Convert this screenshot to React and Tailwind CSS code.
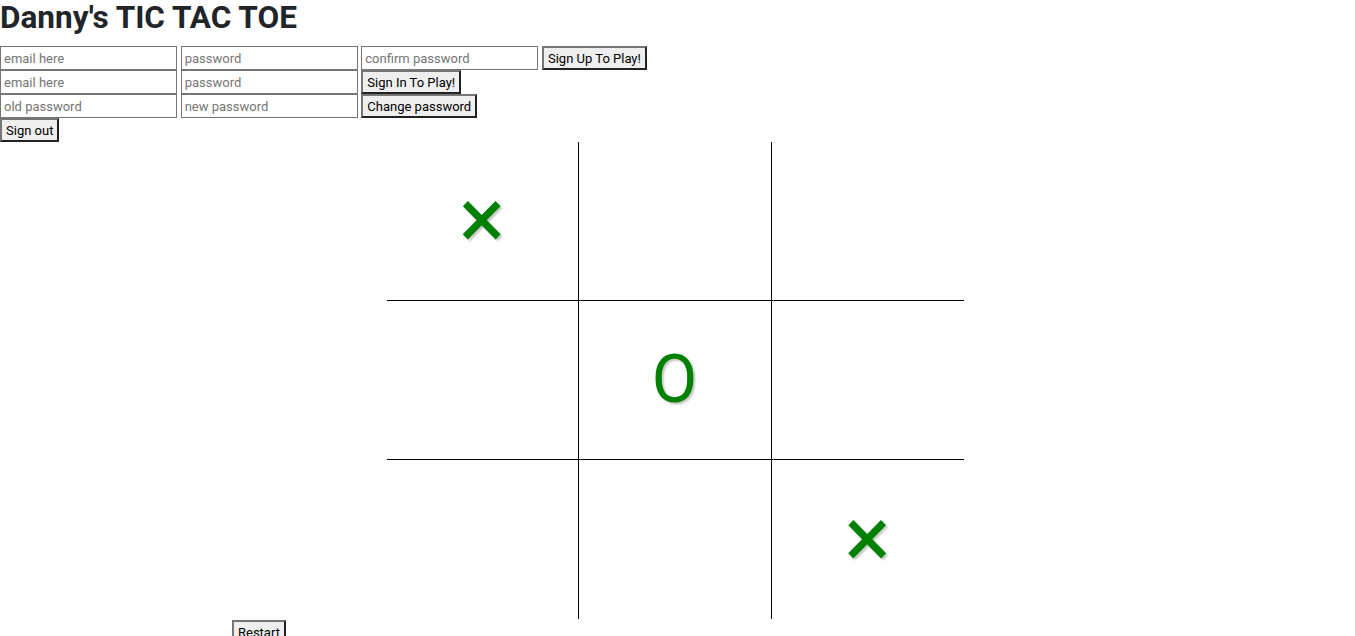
import React, { useState } from 'react';

const FONT = { fontFamily: 'Roboto, "Liberation Sans", sans-serif' };

const Field = ({ placeholder }) => (
  <input
    type="text"
    placeholder={placeholder}
    className="w-[177px] h-[24px] border border-[#767676] px-[3px] text-[13px] text-black placeholder:text-[#757575] outline-none bg-white"
    style={FONT}
  />
);

const Btn = ({ children, className = '' }) => (
  <button
    className={`h-[24px] px-[4px] text-[13px] text-black bg-[#efefef] border-2 border-t-[#767676] border-l-[#767676] border-r-[#222] border-b-[#222] leading-none ${className}`}
    style={FONT}
  >
    {children}
  </button>
);

const Mark = ({ v }) => {
  if (v === 'x') {
    return (
      <span className="text-[#008000] text-[86px] leading-none -mt-[4px] [text-shadow:2px_2px_2px_#c8c8c8]">×</span>
    );
  }
  if (v === 'o') {
    return (
      <span className="text-[#008000] text-[66px] leading-none [text-shadow:2px_2px_2px_#c8c8c8]">O</span>
    );
  }
  return null;
};

export default function App() {
  const [board] = useState(['x', '', '', '', 'o', '', '', '', 'x']);

  const cellBorder = (i) => {
    const c = [];
    if (i % 3 !== 2) c.push('border-r');
    if (i < 6) c.push('border-b');
    return c.join(' ');
  };

  return (
    <div className="min-h-screen bg-white text-[#212529]" style={FONT}>
      <h1 className="text-[31.5px] font-bold leading-[36px] mb-[10px]">Danny's TIC TAC TOE</h1>

      <div className="flex flex-col">
        <div className="flex gap-[3.67px]">
          <Field placeholder="email here" />
          <Field placeholder="password" />
          <Field placeholder="confirm password" />
          <Btn>Sign Up To Play!</Btn>
        </div>
        <div className="flex gap-[3.67px]">
          <Field placeholder="email here" />
          <Field placeholder="password" />
          <Btn>Sign In To Play!</Btn>
        </div>
        <div className="flex gap-[3.67px]">
          <Field placeholder="old password" />
          <Field placeholder="new password" />
          <Btn>Change password</Btn>
        </div>
        <div className="flex">
          <Btn>Sign out</Btn>
        </div>
      </div>

      <div className="w-[1350px] flex justify-center">
        <div className="grid grid-cols-[192px_193px_192px] grid-rows-[159px_159px_159px] w-[577px]">
          {board.map((v, i) => (
            <div key={i} className={`flex items-center justify-center border-black ${cellBorder(i)}`}>
              <Mark v={v} />
            </div>
          ))}
        </div>
      </div>

      <div className="flex pl-[232px] pt-[1px]">
        <Btn>Restart</Btn>
      </div>
    </div>
  );
}
